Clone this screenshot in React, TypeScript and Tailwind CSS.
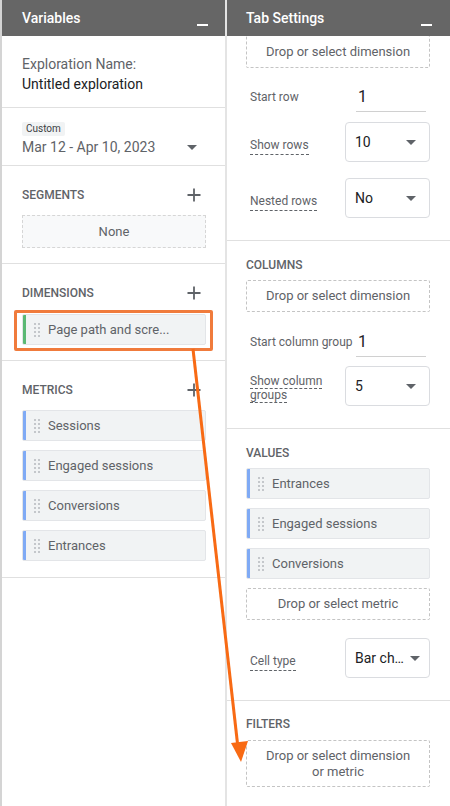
const font = { fontFamily: 'Roboto, "Liberation Sans", sans-serif' }

function Plus() {
  return (
    <svg width="14" height="14" viewBox="0 0 14 14" className="mr-[5px]">
      <path d="M7 0.5v13M0.5 7h13" stroke="#5f6368" strokeWidth="1.8" />
    </svg>
  )
}

function Caret() {
  return (
    <svg width="10" height="5" viewBox="0 0 10 5">
      <path d="M0 0h10L5 5z" fill="#5f6368" />
    </svg>
  )
}

function Handle() {
  return (
    <div className="grid grid-cols-2 gap-x-[2px] gap-y-[2px] w-[6px]">
      {Array.from({ length: 8 }).map((_, i) => (
        <span key={i} className="w-[2px] h-[2px] bg-[#c4c7cb]" />
      ))}
    </div>
  )
}

function Chip({ label, bar }: { label: string; bar: string }) {
  return (
    <div className="flex items-center h-[31px] bg-[#f1f3f4] border border-[#e3e5e8] rounded-[2px] overflow-hidden">
      <span className={`w-[3px] self-stretch ${bar}`} />
      <div className="ml-[8px]">
        <Handle />
      </div>
      <span className="ml-[8px] text-[13px] text-[#5f6368] truncate">{label}</span>
    </div>
  )
}

function Title({ children }: { children: React.ReactNode }) {
  return <div className="text-[12px] leading-4 font-medium text-[#5f6368] uppercase">{children}</div>
}

function DropBox({ text, h = 'h-[32px]' }: { text: string; h?: string }) {
  return (
    <div className={`${h} border border-dashed border-[#c4c4c4] rounded-[2px] flex items-center justify-center text-center text-[13px] leading-[16px] text-[#5f6368] px-3`}>
      {text}
    </div>
  )
}

function Select({ value }: { value: string }) {
  return (
    <div className="w-[85px] h-[40px] border border-[#dadce0] rounded-[4px] flex items-center justify-between gap-[6px] pl-[9px] pr-[13px]">
      <span className="text-[14px] text-[#202124] whitespace-nowrap">{value}</span>
      <span className="flex shrink-0">
        <Caret />
      </span>
    </div>
  )
}

function Dashed({ children }: { children: React.ReactNode }) {
  return (
    <span className="text-[12px] leading-[14px] text-[#5f6368] border-b border-dashed border-[#5f6368] pb-[2px] whitespace-nowrap">
      {children}
    </span>
  )
}

function InputRow({ label }: { label: string }) {
  return (
    <div className="flex items-center h-[30px] pl-[4px]">
      <span className="w-[95px] shrink-0 text-[12px] text-[#5f6368] whitespace-nowrap">{label}</span>
      <div className="ml-[11px] w-[70px] h-[30px] border-b border-[#d0d0d0] flex items-center pl-[2px] pt-[1px] text-[16px] text-[#202124]">
        1
      </div>
    </div>
  )
}

function SelectRow({ label, value }: { label: React.ReactNode; value: string }) {
  return (
    <div className="flex items-center h-[40px] pl-[4px]">
      <div className="w-[95px] shrink-0 pt-[4px]">{label}</div>
      <Select value={value} />
    </div>
  )
}

function Header({ title }: { title: string }) {
  return (
    <div className="h-[36px] bg-[#666666] flex justify-between items-start text-white">
      <span className="text-[14px] font-medium mt-[8px]">{title}</span>
      <span className="w-[11px] h-[2px] bg-white mt-[24px] mr-[-2px]" />
    </div>
  )
}

export default function App() {
  return (
    <div className="relative flex w-[450px] h-[806px] overflow-hidden bg-white" style={font}>
      {/* left panel */}
      <div className="w-[225px] border-l-2 border-[#d4d4d4] flex flex-col">
        <div className="pl-[20px] pr-[19px] bg-[#666666]">
          <Header title="Variables" />
        </div>
        <div className="pl-[20px] pr-[19px] pt-[18px] pb-[13px] border-b border-[#e0e0e0]">
          <div className="text-[14px] leading-5 text-[#5f6368]">Exploration Name:</div>
          <div className="text-[14px] leading-5 text-[#202124]">Untitled exploration</div>
        </div>
        <div className="pl-[20px] pr-[19px] pt-[14px] pb-[8px] border-b border-[#e0e0e0]">
          <div className="w-fit bg-[#f1f3f4] text-[10px] leading-[14px] text-[#3c4043] px-[4px] rounded-[2px]">Custom</div>
          <div className="flex items-center justify-between mt-[1px]">
            <span className="text-[14px] leading-5 text-[#5f6368]">Mar 12 - Apr 10, 2023</span>
            <span className="mr-[9px] flex">
              <Caret />
            </span>
          </div>
        </div>
        <div className="pl-[20px] pr-[19px] pt-[21px] pb-[15px] border-b border-[#e0e0e0]">
          <div className="flex items-center justify-between">
            <Title>Segments</Title>
            <Plus />
          </div>
          <div className="mt-[12px] h-[33px] bg-[#f8f9fa] border border-dashed border-[#d6d6d6] flex items-center justify-center text-[13px] text-[#5f6368]">
            None
          </div>
        </div>
        <div className="pl-[20px] pr-[19px] pt-[21px] pb-[15px] border-b border-[#e0e0e0]">
          <div className="flex items-center justify-between">
            <Title>Dimensions</Title>
            <Plus />
          </div>
          <div className="relative mt-[13px]">
            <Chip label="Page path and scre..." bar="bg-[#5bb974]" />
            <div className="absolute -left-[8px] -right-[7px] -top-[4px] -bottom-[6px] border-[3px] border-[#f07b3c] rounded-[2px]" />
          </div>
        </div>
        <div className="pl-[20px] pr-[19px] pt-[21px] pb-[16px] border-b border-[#e0e0e0]">
          <div className="flex items-center justify-between">
            <Title>Metrics</Title>
            <Plus />
          </div>
          <div className="mt-[12px] flex flex-col gap-[9px]">
            {['Sessions', 'Engaged sessions', 'Conversions', 'Entrances'].map(m => (
              <Chip key={m} label={m} bar="bg-[#7faaf5]" />
            ))}
          </div>
        </div>
      </div>

      {/* right panel */}
      <div className="w-[225px] border-l-2 border-[#e4e4e4] flex flex-col">
        <div className="pl-[19px] pr-[20px] bg-[#666666] relative z-10">
          <Header title="Tab Settings" />
        </div>
        <div className="pl-[19px] pr-[20px] pb-[22px] border-b border-[#e0e0e0] -mt-[1px]">
          <DropBox text="Drop or select dimension" h="h-[33px]" />
          <div className="mt-[14px]">
            <InputRow label="Start row" />
          </div>
          <div className="mt-[10px]">
            <SelectRow label={<Dashed>Show rows</Dashed>} value="10" />
          </div>
          <div className="mt-[16px]">
            <SelectRow label={<Dashed>Nested rows</Dashed>} value="No" />
          </div>
        </div>
        <div className="pl-[19px] pr-[20px] pt-[16px] pb-[22px] border-b border-[#e0e0e0]">
          <Title>Columns</Title>
          <div className="mt-[7px]">
            <DropBox text="Drop or select dimension" />
          </div>
          <div className="mt-[15px]">
            <InputRow label="Start column group" />
          </div>
          <div className="mt-[9px]">
            <SelectRow
              value="5"
              label={
                <div className="text-[12px] leading-[14px] text-[#5f6368] whitespace-nowrap">
                  <span className="border-b border-dashed border-[#5f6368]">Show column</span>
                  <br />
                  <span className="border-b border-dashed border-[#5f6368]">groups</span>
                </div>
              }
            />
          </div>
        </div>
        <div className="pl-[19px] pr-[20px] pt-[16px] pb-[22px] border-b border-[#e0e0e0]">
          <Title>Values</Title>
          <div className="mt-[7px] flex flex-col gap-[9px]">
            {['Entrances', 'Engaged sessions', 'Conversions'].map(m => (
              <Chip key={m} label={m} bar="bg-[#7faaf5]" />
            ))}
          </div>
          <div className="mt-[9px]">
            <DropBox text="Drop or select metric" />
          </div>
          <div className="mt-[18px]">
            <SelectRow label={<Dashed>Cell type</Dashed>} value="Bar ch…" />
          </div>
        </div>
        <div className="pl-[19px] pr-[20px] pt-[15px]">
          <Title>Filters</Title>
          <div className="mt-[8px]">
            <DropBox text="Drop or select dimension or metric" h="h-[47px]" />
          </div>
        </div>
      </div>

      {/* annotation arrow */}
      <svg className="absolute inset-0 pointer-events-none z-20" width="450" height="806" viewBox="0 0 450 806">
        <line x1="193" y1="349" x2="238" y2="748" stroke="#f86a14" strokeWidth="3" />
        <path d="M231 743L248 741L241 762z" fill="#f86a14" />
      </svg>
    </div>
  )
}
